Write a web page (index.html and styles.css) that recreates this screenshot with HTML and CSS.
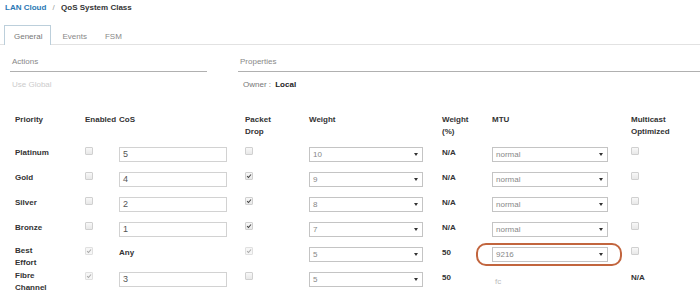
FILE: index.html
```html
<!DOCTYPE html>
<html>
<head>
    <title>QoS System Class</title>
    <link rel="stylesheet" href="styles.css">
</head>
<body>
    <div class="breadcrumb">
        <a class="crumb-link">LAN Cloud</a>
        <span class="crumb-sep">/</span>
        <span class="crumb-current">QoS System Class</span>
    </div>

    <div class="tabs">
        <div class="tab active">General</div>
        <div class="tab">Events</div>
        <div class="tab">FSM</div>
    </div>

    <div class="sections">
        <div class="section actions">
            <div class="section-title">Actions</div>
            <div class="section-body muted">Use Global</div>
        </div>
        <div class="section properties">
            <div class="section-title">Properties</div>
            <div class="section-body owner">Owner : <b>Local</b></div>
        </div>
    </div>

    <div class="qos-grid">
        <!-- header -->
        <div class="th">Priority</div>
        <div class="th">Enabled</div>
        <div class="th">CoS</div>
        <div class="th">Packet<br>Drop</div>
        <div class="th">Weight</div>
        <div class="th">Weight<br>(%)</div>
        <div class="th">MTU</div>
        <div class="th">Multicast<br>Optimized</div>

        <!-- Platinum -->
        <div class="label">Platinum</div>
        <div><span class="cb"></span></div>
        <div><div class="text-input">5</div></div>
        <div><span class="cb"></span></div>
        <div><div class="select weight">10<svg viewBox="0 0 4 3"><path d="M0 0h4L2 3z"/></svg></div></div>
        <div class="label">N/A</div>
        <div><div class="select mtu">normal<svg viewBox="0 0 4 3"><path d="M0 0h4L2 3z"/></svg></div></div>
        <div><span class="cb"></span></div>

        <!-- Gold -->
        <div class="label">Gold</div>
        <div><span class="cb"></span></div>
        <div><div class="text-input">4</div></div>
        <div><span class="cb checked"><svg viewBox="0 0 8 8"><path d="M1.5 4.2l1.8 1.8 3.4-4"/></svg></span></div>
        <div><div class="select weight">9<svg viewBox="0 0 4 3"><path d="M0 0h4L2 3z"/></svg></div></div>
        <div class="label">N/A</div>
        <div><div class="select mtu">normal<svg viewBox="0 0 4 3"><path d="M0 0h4L2 3z"/></svg></div></div>
        <div><span class="cb"></span></div>

        <!-- Silver -->
        <div class="label">Silver</div>
        <div><span class="cb"></span></div>
        <div><div class="text-input">2</div></div>
        <div><span class="cb checked"><svg viewBox="0 0 8 8"><path d="M1.5 4.2l1.8 1.8 3.4-4"/></svg></span></div>
        <div><div class="select weight">8<svg viewBox="0 0 4 3"><path d="M0 0h4L2 3z"/></svg></div></div>
        <div class="label">N/A</div>
        <div><div class="select mtu">normal<svg viewBox="0 0 4 3"><path d="M0 0h4L2 3z"/></svg></div></div>
        <div><span class="cb"></span></div>

        <!-- Bronze -->
        <div class="label">Bronze</div>
        <div><span class="cb"></span></div>
        <div><div class="text-input">1</div></div>
        <div><span class="cb checked"><svg viewBox="0 0 8 8"><path d="M1.5 4.2l1.8 1.8 3.4-4"/></svg></span></div>
        <div><div class="select weight">7<svg viewBox="0 0 4 3"><path d="M0 0h4L2 3z"/></svg></div></div>
        <div class="label">N/A</div>
        <div><div class="select mtu">normal<svg viewBox="0 0 4 3"><path d="M0 0h4L2 3z"/></svg></div></div>
        <div><span class="cb"></span></div>

        <!-- Best Effort -->
        <div class="label two">Best<br>Effort</div>
        <div><span class="cb checked disabled"><svg viewBox="0 0 8 8"><path d="M1.5 4.2l1.8 1.8 3.4-4"/></svg></span></div>
        <div class="label">Any</div>
        <div><span class="cb checked disabled"><svg viewBox="0 0 8 8"><path d="M1.5 4.2l1.8 1.8 3.4-4"/></svg></span></div>
        <div><div class="select weight">5<svg viewBox="0 0 4 3"><path d="M0 0h4L2 3z"/></svg></div></div>
        <div class="label">50</div>
        <div class="highlight"><div class="select mtu">9216<svg viewBox="0 0 4 3"><path d="M0 0h4L2 3z"/></svg></div></div>
        <div><span class="cb"></span></div>

        <!-- Fibre Channel -->
        <div class="label two">Fibre<br>Channel</div>
        <div><span class="cb checked disabled"><svg viewBox="0 0 8 8"><path d="M1.5 4.2l1.8 1.8 3.4-4"/></svg></span></div>
        <div><div class="text-input">3</div></div>
        <div><span class="cb"></span></div>
        <div><div class="select weight">5<svg viewBox="0 0 4 3"><path d="M0 0h4L2 3z"/></svg></div></div>
        <div class="label">50</div>
        <div class="plain">fc</div>
        <div class="label">N/A</div>
    </div>
</body>
</html>
```

FILE: styles.css
```css
body {
    margin: 0;
    font-family: "Liberation Sans", Arial, sans-serif;
    font-size: 8px;
    color: #333;
    background-color: #fff;
}

/* breadcrumb */
.breadcrumb {
    padding: 2px 5px 0;
    line-height: 12px;
    font-weight: bold;
}

.crumb-link {
    color: #2a78b4;
}

.crumb-sep {
    color: #999;
    font-weight: normal;
    margin: 0 4px;
}

.crumb-current {
    color: #333;
}

/* tabs */
.tabs {
    display: flex;
    align-items: flex-end;
    gap: 4px;
    margin-top: 11px;
    padding-left: 4px;
    border-bottom: 1px solid #e2e2e2;
}

.tab {
    height: 18px;
    line-height: 21px;
    padding: 0 7px;
    color: #888;
}

.tab.active {
    padding: 0 8px 1px 9px;
    margin-bottom: -1px;
    border: 1px solid #bccfdb;
    border-bottom: none;
    background-color: #fff;
    color: #777;
}

/* actions / properties */
.sections {
    display: flex;
    gap: 31px;
    padding-left: 10px;
}

.section.actions {
    width: 197px;
}

.section.properties {
    flex: 1;
}

.section-title {
    margin-top: 10px;
    padding: 1px 2px 3px;
    line-height: 12px;
    color: #888;
    border-bottom: 1px solid #b0b0b0;
}

.section-body {
    margin-top: 7px;
    padding-left: 2px;
    line-height: 12px;
}

.section-body.muted {
    color: #ccc;
}

.section-body.owner {
    padding-left: 5px;
    color: #777;
}

.section-body.owner b {
    color: #222;
    margin-left: 2px;
}

/* qos table */
.qos-grid {
    display: grid;
    grid-template-columns: 70px 34px 126px 64px 133px 50px 139px 1fr;
    grid-template-rows: 33px;
    grid-auto-rows: 25px;
    margin-top: 23px;
    padding-left: 15px;
    line-height: 12px;
}

.th {
    font-weight: bold;
    color: #333;
}

.label {
    margin-top: 0;
    font-weight: bold;
    color: #333;
}

.label.two {
    margin-top: -2px;
}

.plain {
    margin-top: 4px;
    padding-left: 3px;
    color: #bbb;
}

.text-input {
    width: 108px;
    height: 15px;
    box-sizing: border-box;
    border: 1px solid #d2d2d2;
    padding-left: 3px;
    line-height: 13px;
    font-size: 9px;
    color: #555;
}

.select {
    display: flex;
    align-items: center;
    justify-content: space-between;
    height: 15px;
    box-sizing: border-box;
    border: 1px solid #c4c4c4;
    padding: 0 4px 0 3px;
    font-size: 8px;
    color: #888;
}

.select.weight {
    width: 114px;
}

.select.mtu {
    width: 116px;
}

.select svg {
    width: 4px;
    height: 3px;
    fill: #333;
}

.cb {
    display: block;
    width: 6px;
    height: 6px;
    border: 1px solid #d0d0d0;
    border-radius: 1px;
    background: linear-gradient(#f8f8f8, #e8e8e8);
}

.cb svg {
    display: block;
    width: 6px;
    height: 6px;
    fill: none;
    stroke: #444;
    stroke-width: 1.4;
}

.cb.disabled {
    border-color: #e0e0e0;
    background: #f6f6f6;
}

.cb.disabled svg {
    stroke: #aaa;
}

/* annotation ring around the jumbo MTU */
.highlight {
    position: relative;
}

.highlight::after {
    content: "";
    position: absolute;
    top: -4px;
    left: -16px;
    width: 146px;
    height: 23px;
    box-sizing: border-box;
    border: 2px solid #c2653e;
    border-radius: 10px;
}
```
